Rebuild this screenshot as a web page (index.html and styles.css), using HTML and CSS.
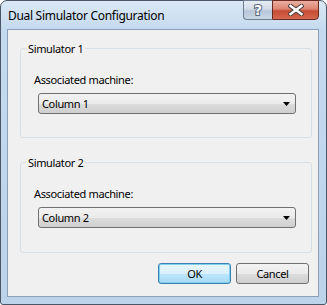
FILE: index.html
```html
<!DOCTYPE html>
<html lang="en">
<head>
    <meta charset="UTF-8">
    <title>Dual Simulator Configuration</title>
    <link rel="stylesheet" href="styles.css">
</head>
<body>
    <div class="window">
        <div class="titlebar">
            <span class="title">Dual Simulator Configuration</span>
            <div class="caption-buttons">
                <div class="cap-btn help-btn">
                    <svg width="14" height="16" viewBox="0 0 14 16">
                        <text x="7" y="13" text-anchor="middle" class="help-glyph">?</text>
                    </svg>
                </div>
                <div class="cap-btn close-btn">
                    <svg width="16" height="12" viewBox="0 0 16 12">
                        <path d="M2.5 2 L13.5 10 M13.5 2 L2.5 10" stroke="#4a3f3c" stroke-width="4.4" stroke-linecap="square"/>
                        <path d="M2.5 2 L13.5 10 M13.5 2 L2.5 10" stroke="#fff" stroke-width="2.4" stroke-linecap="square"/>
                    </svg>
                </div>
            </div>
        </div>

        <div class="client">
            <div class="group">
                <span class="group-title">Simulator 1</span>
                <div class="field-label">Associated machine:</div>
                <div class="combo">
                    <span>Column 1</span>
                    <svg class="arrow" width="7" height="4" viewBox="0 0 7 4"><path d="M0 0 H7 L3.5 4 Z" fill="#000"/></svg>
                </div>
            </div>

            <div class="group second">
                <span class="group-title">Simulator 2</span>
                <div class="field-label">Associated machine:</div>
                <div class="combo">
                    <span>Column 2</span>
                    <svg class="arrow" width="7" height="4" viewBox="0 0 7 4"><path d="M0 0 H7 L3.5 4 Z" fill="#000"/></svg>
                </div>
            </div>

            <div class="buttons">
                <button class="btn default">OK</button>
                <button class="btn">Cancel</button>
            </div>
        </div>
    </div>
</body>
</html>
```

FILE: styles.css
```css
body {
    margin: 0;
    font-family: 'Noto Sans', 'Open Sans', sans-serif;
    font-size: 11px;
    letter-spacing: -0.35px;
    color: #000;
    background: #fff;
}
.window {
    width: 327px;
    height: 305px;
    box-sizing: border-box;
    border: 1px solid #4a5666;
    border-radius: 7px 7px 3px 3px;
    background: linear-gradient(to bottom, #dbe8f5 0px, #c6daef 28px, #bcd3ea 100%);
    padding: 0 7px 7px 6px;
    display: flex;
    flex-direction: column;
}
.titlebar {
    height: 28px;
    display: flex;
    align-items: flex-start;
    justify-content: space-between;
}
.title {
    font-size: 12px;
    letter-spacing: -0.3px;
    margin-top: 6px;
    margin-left: 1px;
    color: #000;
}
.caption-buttons {
    display: flex;
    margin-top: -1px;
}
.cap-btn {
    height: 20px;
    box-sizing: border-box;
    display: flex;
    align-items: center;
    justify-content: center;
}
.help-btn {
    width: 29px;
    border: 1px solid #6d7d92;
    border-right: none;
    border-radius: 0 0 0 4px;
    background: linear-gradient(to bottom, #e6edf4 0%, #d2dce8 45%, #b7c6d8 55%, #c9d6e4 100%);
}
.help-glyph {
    font-family: 'DejaVu Sans', sans-serif;
    font-weight: bold;
    font-size: 14px;
    letter-spacing: 0;
    fill: #fff;
    stroke: #56657a;
    stroke-width: 2px;
    paint-order: stroke fill;
}
.close-btn {
    width: 47px;
    border: 1px solid #6b2a20;
    border-radius: 0 0 4px 0;
    background: linear-gradient(to bottom, #eab0a3 0%, #dd8470 45%, #c74c35 55%, #d4674f 100%);
}
.client {
    flex: 1;
    border: 1px solid #8c9fb6;
    background: #f0f0f0;
    padding: 18px 6px 0 12px;
    display: flex;
    flex-direction: column;
}
.group {
    position: relative;
    width: 292px;
    height: 90px;
    box-sizing: border-box;
    border: 1px solid #d5dfe5;
    border-radius: 3px;
    padding: 24px 0 0 13px;
}
.group.second {
    margin-top: 24px;
    height: 91px;
}
.group-title {
    position: absolute;
    top: -8px;
    left: 5px;
    padding: 0 2px;
    background: #f0f0f0;
    line-height: 15px;
}
.field-label {
    line-height: 14px;
}
.combo {
    margin: 6px 0 0 4px;
    width: 258px;
    height: 21px;
    box-sizing: border-box;
    border: 1px solid #707070;
    border-radius: 3px;
    background: linear-gradient(to bottom, #f2f2f2 0%, #ebebeb 50%, #dddddd 51%, #cfcfcf 100%);
    display: flex;
    align-items: center;
    justify-content: space-between;
    padding: 0 5px 0 3px;
}
.arrow {
    margin-top: 1px;
}
.buttons {
    display: flex;
    justify-content: flex-end;
    gap: 5px;
    margin-top: 10px;
    padding-right: 3px;
}
.btn {
    width: 73px;
    height: 21px;
    font-family: 'Noto Sans', 'Open Sans', sans-serif;
    font-size: 11px;
    letter-spacing: -0.35px;
    border: 1px solid #707070;
    border-radius: 3px;
    background: linear-gradient(to bottom, #f2f2f2 0%, #ebebeb 50%, #dddddd 51%, #cfcfcf 100%);
    padding: 0;
    color: #000;
}
.btn.default {
    border-color: #3c7fb1;
    box-shadow: inset 0 0 0 1px #7ed0ef;
    background: linear-gradient(to bottom, #eaf6fd 0%, #d9f0fc 50%, #bee6fd 51%, #a7d9f5 100%);
}
```
